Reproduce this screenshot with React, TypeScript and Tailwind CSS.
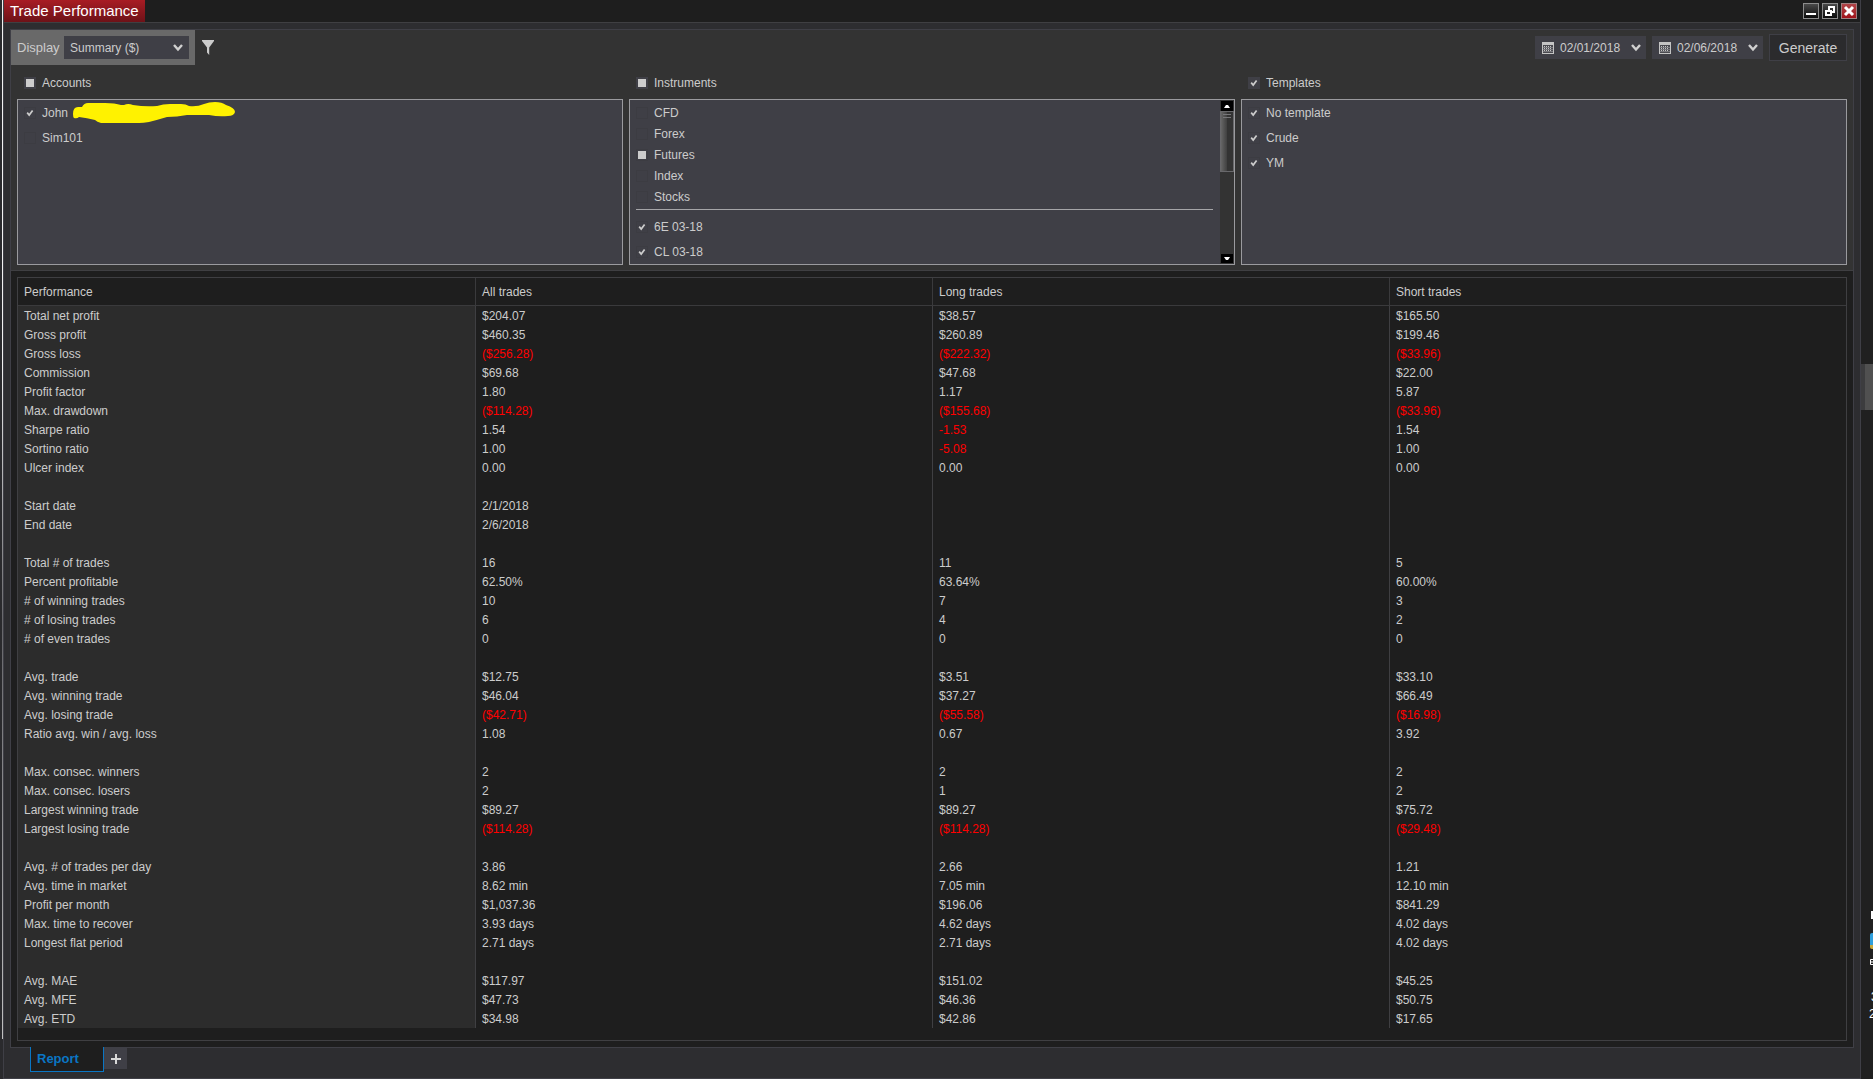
import { useState } from 'react';

type Check = 'on' | 'off' | 'mixed';

interface Option {
  id: string;
  label: string;
  state: Check;
}

const ACCOUNTS: Option[] = [
  { id: 'john', label: 'John', state: 'on' },
  { id: 'sim101', label: 'Sim101', state: 'off' },
];

const INSTRUMENT_TYPES: Option[] = [
  { id: 'cfd', label: 'CFD', state: 'off' },
  { id: 'forex', label: 'Forex', state: 'off' },
  { id: 'futures', label: 'Futures', state: 'mixed' },
  { id: 'index', label: 'Index', state: 'off' },
  { id: 'stocks', label: 'Stocks', state: 'off' },
];

const CONTRACTS: Option[] = [
  { id: '6e', label: '6E 03-18', state: 'on' },
  { id: 'cl', label: 'CL 03-18', state: 'on' },
];

const TEMPLATES: Option[] = [
  { id: 'none', label: 'No template', state: 'on' },
  { id: 'crude', label: 'Crude', state: 'on' },
  { id: 'ym', label: 'YM', state: 'on' },
];

const COLUMNS = ['Performance', 'All trades', 'Long trades', 'Short trades'];

// an empty row is a spacer between groups
const ROWS: string[][] = [
  ['Total net profit', '$204.07', '$38.57', '$165.50'],
  ['Gross profit', '$460.35', '$260.89', '$199.46'],
  ['Gross loss', '($256.28)', '($222.32)', '($33.96)'],
  ['Commission', '$69.68', '$47.68', '$22.00'],
  ['Profit factor', '1.80', '1.17', '5.87'],
  ['Max. drawdown', '($114.28)', '($155.68)', '($33.96)'],
  ['Sharpe ratio', '1.54', '-1.53', '1.54'],
  ['Sortino ratio', '1.00', '-5.08', '1.00'],
  ['Ulcer index', '0.00', '0.00', '0.00'],
  ['', '', '', ''],
  ['Start date', '2/1/2018', '', ''],
  ['End date', '2/6/2018', '', ''],
  ['', '', '', ''],
  ['Total # of trades', '16', '11', '5'],
  ['Percent profitable', '62.50%', '63.64%', '60.00%'],
  ['# of winning trades', '10', '7', '3'],
  ['# of losing trades', '6', '4', '2'],
  ['# of even trades', '0', '0', '0'],
  ['', '', '', ''],
  ['Avg. trade', '$12.75', '$3.51', '$33.10'],
  ['Avg. winning trade', '$46.04', '$37.27', '$66.49'],
  ['Avg. losing trade', '($42.71)', '($55.58)', '($16.98)'],
  ['Ratio avg. win / avg. loss', '1.08', '0.67', '3.92'],
  ['', '', '', ''],
  ['Max. consec. winners', '2', '2', '2'],
  ['Max. consec. losers', '2', '1', '2'],
  ['Largest winning trade', '$89.27', '$89.27', '$75.72'],
  ['Largest losing trade', '($114.28)', '($114.28)', '($29.48)'],
  ['', '', '', ''],
  ['Avg. # of trades per day', '3.86', '2.66', '1.21'],
  ['Avg. time in market', '8.62 min', '7.05 min', '12.10 min'],
  ['Profit per month', '$1,037.36', '$196.06', '$841.29'],
  ['Max. time to recover', '3.93 days', '4.62 days', '4.02 days'],
  ['Longest flat period', '2.71 days', '2.71 days', '4.02 days'],
  ['', '', '', ''],
  ['Avg. MAE', '$117.97', '$151.02', '$45.25'],
  ['Avg. MFE', '$47.73', '$46.36', '$50.75'],
  ['Avg. ETD', '$34.98', '$42.86', '$17.65'],
];

const isNegative = (value: string) => value.startsWith('(') || value.startsWith('-');

function Chevron() {
  return (
    <svg viewBox="0 0 10 8" className="pointer-events-none h-2 w-2.5 shrink-0" fill="none" stroke="#d0d0d0" strokeWidth="2.4">
      <path d="M1 1 L5 5.5 L9 1" />
    </svg>
  );
}

function CheckRow({ option, className, header }: { option: Option; className: string; header?: boolean }) {
  const [state, setState] = useState<Check>(option.state);

  return (
    <label className={`flex items-center gap-[6px] ${className}`}>
      <span
        className={`relative flex h-3 w-3 shrink-0 items-center justify-center ${
          header ? 'bg-[#3f3f46]' : 'border border-[#3c3c42]'
        }`}
      >
        <input
          type="checkbox"
          checked={state !== 'off'}
          onChange={() => setState(state === 'on' ? 'off' : 'on')}
          className="absolute inset-0 h-full w-full appearance-none"
        />
        {state === 'mixed' && <span className="pointer-events-none h-2 w-2 shrink-0 bg-[#cccccc]" />}
        {state === 'on' && (
          <svg viewBox="0 0 8 8" className="pointer-events-none h-2 w-2 shrink-0" fill="none" stroke="#cccccc">
            <path d="M1.2 3.6 L3.2 6 L6.6 1.4" strokeWidth="1.7" />
          </svg>
        )}
      </span>
      <span>{option.label}</span>
    </label>
  );
}

function DatePicker({ label, value }: { label: string; value: string }) {
  return (
    <div className="flex h-[23px] w-[111px] items-center bg-[#3f3f46] pr-[5px] pl-[7px]">
      <svg viewBox="0 0 12 12" className="h-3 w-3 shrink-0" shapeRendering="crispEdges">
        <rect x="0" y="0" width="12" height="12" fill="#c4c4c4" />
        <rect x="1" y="3" width="10" height="8" fill="#4a4a50" />
        <path d="M2 4.5h8M2 6.5h8M2 8.5h8" stroke="#c4c4c4" strokeDasharray="1 1" />
        <path d="M1 5.5h10M1 7.5h10M1 9.5h10" stroke="#77777c" />
      </svg>
      <input
        type="text"
        aria-label={label}
        defaultValue={value}
        className="ml-[6px] min-w-0 flex-1 bg-transparent text-xs outline-none"
      />
      <Chevron />
    </div>
  );
}

function Toolbar() {
  return (
    <div className="flex h-[35px] items-center">
      <div className="flex h-full items-center bg-[#696969] px-[6px]">
        <label htmlFor="display" className="w-[47px] text-[13px]">
          Display
        </label>
        <div className="flex h-[23px] w-[125px] items-center bg-[#3f3f46] pr-[6px]">
          <select id="display" className="h-full min-w-0 flex-1 appearance-none bg-transparent pl-[6px] text-xs outline-none">
            <option>Summary ($)</option>
          </select>
          <Chevron />
        </div>
      </div>
      <button aria-label="Filter" className="ml-[7px]">
        <svg viewBox="0 0 12 15" className="h-[15px] w-3" fill="#cccccc">
          <path d="M0 0h12v1L7.2 7.5V15L5 12.5V7.5L0 1z" />
        </svg>
      </button>
      <div className="mr-[6px] ml-auto flex items-center gap-[6px]">
        <DatePicker label="From" value="02/01/2018" />
        <DatePicker label="To" value="02/06/2018" />
        <button className="h-[27px] w-[78px] border border-[#3f3f46] bg-[#2b2b2d] text-sm">Generate</button>
      </div>
    </div>
  );
}

// marker stroke over the account name
function Redaction() {
  return (
    <svg viewBox="0 0 162 22" className="absolute top-0.5 left-[55px] h-[22px] w-[162px]" fill="#fff200">
      <path d="M0 12 Q0 5 5 5 L9 5 Q11 1 15 1 L32 1 Q42 1 48 3 L51 3 Q55 1 60 3 Q72 5 84 4 Q90 2 97 2 L108 2 Q113 2 116 4 Q124 5 131 2 Q136 0 142 0 Q149 0 153 3 Q162 6 162 10 Q161 14 155 14 Q146 15 136 13 Q124 13 114 13 Q104 15 94 15 Q84 18 76 20 Q70 21 66 21 L28 21 Q24 20 22 18 Q14 16 6 15 Q4 17 1 16 Q0 15 0 12z" />
    </svg>
  );
}

function Scrollbar() {
  return (
    <div className="flex w-3.5 shrink-0 flex-col items-center bg-[#333333] py-px">
      <button aria-label="Scroll up" className="flex h-2.5 w-3 shrink-0 items-center justify-center bg-black">
        <svg viewBox="0 0 6 3" className="h-[3px] w-1.5" fill="#ffffff">
          <path d="M0 3L2 0h2l2 3z" />
        </svg>
      </button>
      <div className="flex h-[61px] w-full flex-col items-center gap-0.5 border border-[#68686b] bg-linear-to-r from-[#666666] from-0% via-[#404040] via-50% to-[#333333] to-50% pt-0.5">
        <span className="h-px w-2 bg-[#77777a]" />
        <span className="h-px w-2 bg-[#77777a]" />
      </div>
      <button aria-label="Scroll down" className="mt-auto flex h-[9px] w-3 shrink-0 items-center justify-center bg-black">
        <svg viewBox="0 0 6 3" className="h-[3px] w-1.5" fill="#ffffff">
          <path d="M0 0h6L4 3H2z" />
        </svg>
      </button>
    </div>
  );
}

const LIST_BOX = 'h-[166px] border border-[#9a9a9e] bg-[#3f3f46]';
const LIST_HEADER = 'h-[34px] pt-0.5 pl-[7px]';

function Filters() {
  return (
    <div className="grid grid-cols-3 gap-[6px] px-[6px]">
      <section>
        <CheckRow header option={{ id: 'accounts', label: 'Accounts', state: 'mixed' }} className={LIST_HEADER} />
        <div className={`relative ${LIST_BOX}`}>
          {ACCOUNTS.map((option) => (
            <CheckRow key={option.id} option={option} className="h-[25px] pl-[6px]" />
          ))}
          <Redaction />
        </div>
      </section>

      <section>
        <CheckRow header option={{ id: 'instruments', label: 'Instruments', state: 'mixed' }} className={LIST_HEADER} />
        <div className={`flex ${LIST_BOX}`}>
          <div className="min-w-0 flex-1 pt-0.5">
            {INSTRUMENT_TYPES.map((option) => (
              <CheckRow key={option.id} option={option} className="h-[21px] pl-[6px]" />
            ))}
            <hr className="mt-0.5 mr-[7px] mb-1 ml-[6px] border-[#a5a5a8]" />
            {CONTRACTS.map((option) => (
              <CheckRow key={option.id} option={option} className="h-[25px] pl-[6px]" />
            ))}
          </div>
          <Scrollbar />
        </div>
      </section>

      <section>
        <CheckRow header option={{ id: 'templates', label: 'Templates', state: 'on' }} className={LIST_HEADER} />
        <div className={LIST_BOX}>
          {TEMPLATES.map((option) => (
            <CheckRow key={option.id} option={option} className="h-[25px] pl-[6px]" />
          ))}
        </div>
      </section>
    </div>
  );
}

function PerformanceTable() {
  return (
    <div className="m-[6px] border border-[#3f3f42] pb-3">
      <table className="w-full table-fixed border-separate border-spacing-0 text-left">
        <thead>
          <tr className="h-7">
            {COLUMNS.map((name, i) => (
              <th key={name} className={`border-b border-[#3a3a3c] p-0 pl-[6px] font-normal ${i > 0 ? 'border-l' : ''}`}>
                {name}
              </th>
            ))}
          </tr>
        </thead>
        <tbody>
          {ROWS.map((row, r) => (
            <tr key={r} className="h-[19px]">
              {row.map((value, i) => (
                <td
                  key={i}
                  className={`p-0 pt-px pl-[6px] leading-[18px] ${
                    i === 0 ? 'bg-[#2c2c2c]' : 'border-l border-[#3f3f42]'
                  } ${i > 0 && isNegative(value) ? 'text-[#ff0000]' : ''}`}
                >
                  {value}
                </td>
              ))}
            </tr>
          ))}
        </tbody>
      </table>
    </div>
  );
}

function WindowButtons() {
  return (
    <div className="flex items-center gap-[3px] pr-[3px]">
      <button aria-label="Minimize" className="h-4 w-4 border border-[#8c8c8c] bg-linear-to-b from-[#4a4a4a] to-[#0c0c0c]">
        <svg viewBox="0 0 14 14" fill="#ffffff" shapeRendering="crispEdges">
          <rect x="2" y="9" width="10" height="2" />
        </svg>
      </button>
      <button aria-label="Restore" className="h-4 w-4 border border-[#8c8c8c] bg-linear-to-b from-[#4a4a4a] to-[#0c0c0c]">
        <svg viewBox="0 0 14 14" fill="none" stroke="#ffffff" strokeWidth="2" shapeRendering="crispEdges">
          <path d="M3 7h5v4H3z" />
          <path d="M6 6V3h5v5H9" />
        </svg>
      </button>
      <button aria-label="Close" className="h-4 w-4 border border-[#a08080] bg-linear-to-b from-[#b04448] to-[#a01018]">
        <svg viewBox="0 0 14 14" fill="none" stroke="#ffffff" strokeWidth="3">
          <path d="M3 3l8 8M11 3l-8 8" />
        </svg>
      </button>
    </div>
  );
}

// the slice of desktop that shows beside the window
function DesktopEdge() {
  return (
    <div className="flex w-3 shrink-0 flex-col overflow-hidden bg-[#202020]">
      <div className="mt-[364px] h-[46px] border-l-4 border-[#3c3c3e] bg-[#505050]" />
      <div className="mt-[501px] ml-2.5 h-2 w-1 bg-white" />
      <div className="mt-3.5 ml-[9px] h-4 w-4 rounded-xs border-b-4 border-[#c9a83a] bg-[#2f9fdc]" />
      <svg viewBox="0 0 4 14" className="mt-2.5 ml-[9px] h-3.5 w-1 shrink-0" fill="none" stroke="#ffffff">
        <path d="M4 .5H.5v5H4M.5 3H4M3.5 6v8" />
      </svg>
      <div className="mt-4 ml-2 text-xs leading-[17px] text-white">
        <p className="pl-0.5">3</p>
        <p>2</p>
      </div>
    </div>
  );
}

export default function App() {
  return (
    <div className="flex min-h-screen overflow-hidden bg-[#1e1e1e] font-['Liberation_Sans',Arial,sans-serif] text-xs text-[#cccccc]">
      <div className="flex w-[3px] shrink-0 justify-end bg-[#2a2a2d] pb-10">
        <div className="w-px bg-linear-to-b from-[#f0f0f0] from-35% via-[#66666a] via-60% to-[#c0c0c0]" />
      </div>

      <main className="flex min-w-0 flex-1 flex-col border-r border-b border-l border-[#3f3f46] bg-[#2d2d30]">
        <header className="flex h-[23px] justify-between border-b border-[#3f3f42] bg-[#1e1e1e]">
          <h1 className="bg-linear-to-b from-[#a81c24] to-[#6e1218] px-[6px] text-[15px] leading-[22px] text-white">
            Trade Performance
          </h1>
          <WindowButtons />
        </header>

        <div className="mx-[6px] mt-[6px] border border-[#3f3f46] bg-[#1e1e1e]">
          <div className="border-b border-[#3f3f42] bg-[#333333] pb-[5px]">
            <Toolbar />
            <Filters />
          </div>
          <PerformanceTable />
        </div>

        <nav className="-mt-px flex items-start pl-[26px]">
          <button className="h-[25px] w-[74px] border-r border-b border-l border-[#0a76c4] bg-[#1e1e1e] pl-[6px] text-left text-[13px] font-bold text-[#0a76c4]">
            Report
          </button>
          <button aria-label="Add tab" className="mt-px flex h-[21px] w-[23px] items-center justify-center bg-[#3f3f46]">
            <svg viewBox="0 0 10 10" className="h-2.5 w-2.5" fill="#d8d8d8" shapeRendering="crispEdges">
              <path d="M4 0h2v4h4v2H6v4H4V6H0V4h4z" />
            </svg>
          </button>
        </nav>
      </main>

      <DesktopEdge />
    </div>
  );
}
